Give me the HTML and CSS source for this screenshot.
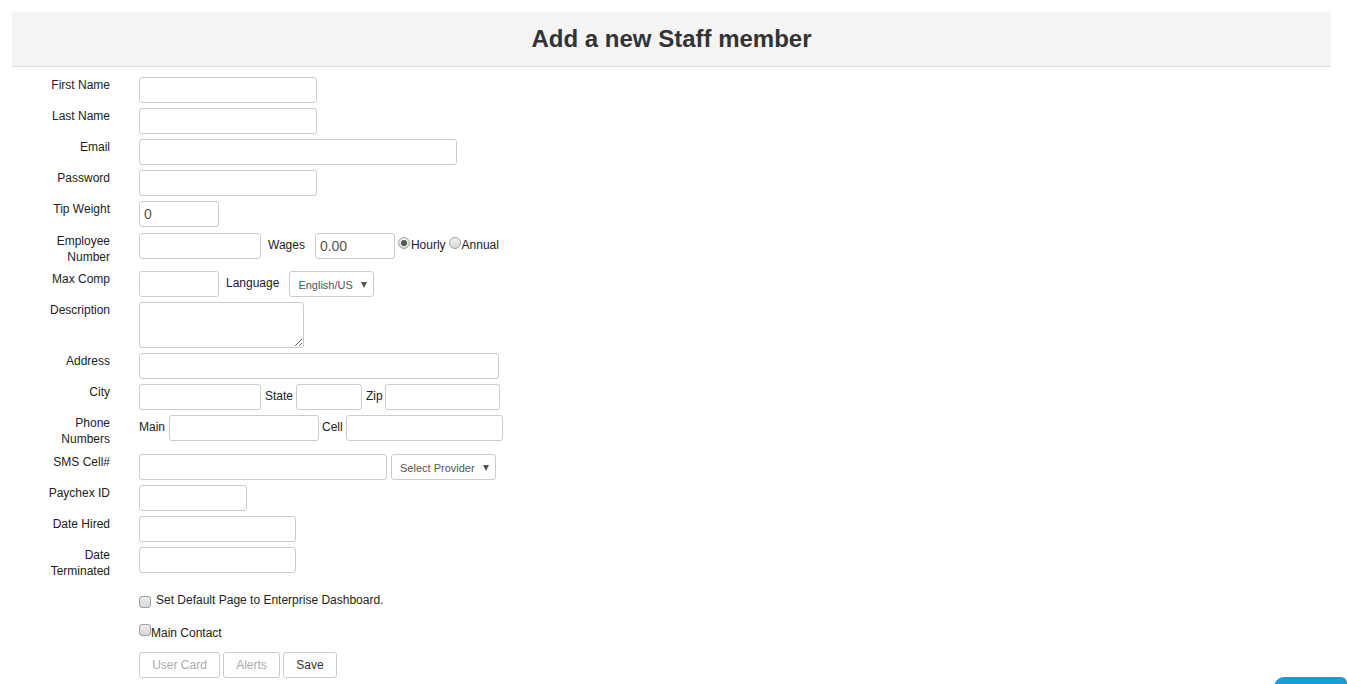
FILE: index.html
```html
<!DOCTYPE html>
<html lang="en">
<head>
    <meta charset="UTF-8">
    <title>Add a new Staff member</title>
    <link rel="stylesheet" href="styles.css">
</head>
<body>
    <div class="page">
        <div class="page-header">
            <h1>Add a new Staff member</h1>
        </div>

        <form class="staff-form">
            <div class="row">
                <label class="lbl">First Name</label>
                <div class="ctl"><input type="text" class="w178"></div>
            </div>
            <div class="row">
                <label class="lbl">Last Name</label>
                <div class="ctl"><input type="text" class="w178"></div>
            </div>
            <div class="row">
                <label class="lbl">Email</label>
                <div class="ctl"><input type="text" class="w318"></div>
            </div>
            <div class="row">
                <label class="lbl">Password</label>
                <div class="ctl"><input type="password" class="w178"></div>
            </div>
            <div class="row">
                <label class="lbl">Tip Weight</label>
                <div class="ctl"><input type="text" class="w80" value="0"></div>
            </div>
            <div class="row emp-row">
                <label class="lbl">Employee<br>Number</label>
                <div class="ctl">
                    <input type="text" class="w122">
                    <span class="inl wages-lbl">Wages</span>
                    <input type="text" class="w80" value="0.00">
                    <span class="radio-opt"><input type="radio" name="pay" checked>Hourly</span>
                    <span class="radio-opt"><input type="radio" name="pay">Annual</span>
                </div>
            </div>
            <div class="row">
                <label class="lbl">Max Comp</label>
                <div class="ctl">
                    <input type="text" class="w80">
                    <span class="inl lang-lbl">Language</span>
                    <span class="sel w85"><select><option>English/US</option></select></span>
                </div>
            </div>
            <div class="row">
                <label class="lbl">Description</label>
                <div class="ctl"><textarea></textarea></div>
            </div>
            <div class="row">
                <label class="lbl">Address</label>
                <div class="ctl"><input type="text" class="w360"></div>
            </div>
            <div class="row">
                <label class="lbl">City</label>
                <div class="ctl">
                    <input type="text" class="w122">
                    <span class="inl tight">State</span>
                    <input type="text" class="w66">
                    <span class="inl tight zip-lbl">Zip</span>
                    <input type="text" class="w115">
                </div>
            </div>
            <div class="row phone-row">
                <label class="lbl">Phone<br>Numbers</label>
                <div class="ctl">
                    <span class="inl first">Main</span>
                    <input type="text" class="w150">
                    <span class="inl cell-lbl">Cell</span>
                    <input type="text" class="w157">
                </div>
            </div>
            <div class="row">
                <label class="lbl">SMS Cell#</label>
                <div class="ctl">
                    <input type="text" class="w248">
                    <span class="sel w105 provider"><select><option>Select Provider</option></select></span>
                </div>
            </div>
            <div class="row">
                <label class="lbl">Paychex ID</label>
                <div class="ctl"><input type="text" class="w108"></div>
            </div>
            <div class="row">
                <label class="lbl">Date Hired</label>
                <div class="ctl"><input type="text" class="w157"></div>
            </div>
            <div class="row">
                <label class="lbl">Date<br>Terminated</label>
                <div class="ctl"><input type="text" class="w157"></div>
            </div>

            <div class="check-row dash-row">
                <input type="checkbox"><span>Set Default Page to Enterprise Dashboard.</span>
            </div>
            <div class="check-row contact-row">
                <input type="checkbox"><span>Main Contact</span>
            </div>

            <div class="actions">
                <button type="button" class="btn btn-card" disabled>User Card</button>
                <button type="button" class="btn btn-alerts" disabled>Alerts</button>
                <button type="button" class="btn btn-save">Save</button>
            </div>
        </form>
    </div>

    <div class="chat-tab"></div>
</body>
</html>
```

FILE: styles.css
```css
body {
    margin: 0;
    font-family: "Liberation Sans", Arial, sans-serif;
    font-size: 12px;
    color: #333;
    background: #fff;
    overflow: hidden;
}
.page {
    padding: 12px 16px 0 12px;
}
.page-header {
    background: #f4f4f4;
    border-bottom: 1px solid #ddd;
    height: 54px;
    display: flex;
    align-items: center;
    justify-content: center;
}
.page-header h1 {
    margin: 0;
    font-size: 24px;
    font-weight: bold;
    color: #333;
}
.staff-form {
    padding-top: 10px;
}
.row {
    display: flex;
    align-items: flex-start;
    margin-bottom: 5px;
}
.emp-row {
    padding-top: 1px;
}
.phone-row {
    margin-bottom: 6px;
}
.lbl {
    width: 98px;
    margin-right: 29px;
    padding-bottom: 1px;
    text-align: right;
    line-height: 16px;
    color: #222;
}
.ctl {
    display: flex;
    align-items: center;
}
input[type="text"], input[type="password"], textarea {
    box-sizing: border-box;
    height: 26px;
    border: 1px solid #ccc;
    border-radius: 3px;
    padding: 0 4px;
    font-family: "Liberation Sans", Arial, sans-serif;
    font-size: 14px;
    color: #555;
    margin: 0;
}
textarea {
    width: 165px;
    height: 46px;
    resize: both;
}
.w66 { width: 66px; }
.w80 { width: 80px; }
.w108 { width: 108px; }
.w115 { width: 115px; }
.w122 { width: 122px; }
.w150 { width: 150px; }
.w157 { width: 157px; }
.w178 { width: 178px; }
.w248 { width: 248px; }
.w318 { width: 318px; }
.w360 { width: 360px; }

.inl {
    color: #222;
    margin-top: -3px;
}
.wages-lbl {
    margin-left: 7px;
    margin-right: 10px;
}
.lang-lbl {
    margin-left: 7px;
    margin-right: 10px;
}
.inl.tight {
    margin-left: 4px;
    margin-right: 3px;
}
.inl.zip-lbl {
    margin-right: 2px;
}
.inl.first {
    margin-right: 4px;
}
.inl.cell-lbl {
    margin-left: 3px;
    margin-right: 3px;
}
.radio-opt {
    display: flex;
    align-items: flex-start;
    align-self: flex-start;
    margin-top: 4px;
    margin-left: 3px;
    line-height: 17px;
    color: #222;
}
input[type="radio"] {
    appearance: none;
    -webkit-appearance: none;
    width: 12px;
    height: 12px;
    margin: 0 1px 0 0;
    border: 1px solid #a0a0a0;
    border-radius: 50%;
    background: linear-gradient(#f2f2f2, #d8d8d8);
    box-sizing: border-box;
    position: relative;
}
input[type="radio"]:checked::after {
    content: "";
    position: absolute;
    left: 2px;
    top: 2px;
    width: 6px;
    height: 6px;
    border-radius: 50%;
    background: #555;
}
.sel {
    position: relative;
    display: inline-block;
}
.sel select {
    appearance: none;
    -webkit-appearance: none;
    box-sizing: border-box;
    width: 100%;
    height: 26px;
    border: 1px solid #ccc;
    border-radius: 3px;
    background: #fff;
    padding: 2px 0 0 8px;
    font-family: "Liberation Sans", Arial, sans-serif;
    font-size: 11px;
    color: #555;
    margin: 0;
}
.sel::after {
    content: "";
    position: absolute;
    right: 7px;
    top: 11px;
    width: 0;
    height: 0;
    border-left: 3px solid transparent;
    border-right: 3px solid transparent;
    border-top: 6px solid #555;
    pointer-events: none;
}
.w85 { width: 85px; }
.w105 { width: 105px; }
.provider {
    margin-left: 4px;
}

.check-row {
    margin-left: 127px;
    display: flex;
    color: #222;
}
input[type="checkbox"] {
    appearance: none;
    -webkit-appearance: none;
    width: 12px;
    height: 12px;
    margin: 0;
    border: 1px solid #a0a0a0;
    border-radius: 3px;
    background: linear-gradient(#eee, #d6d6d6);
    box-sizing: border-box;
}
.dash-row {
    margin-top: 14px;
    align-items: flex-start;
}
.dash-row input {
    margin-top: 2px;
    margin-right: 5px;
}
.dash-row span {
    line-height: 17px;
    margin-top: -2px;
}
.contact-row {
    margin-top: 15px;
    align-items: flex-start;
}
.contact-row span {
    margin-top: 1px;
    line-height: 17px;
}
.actions {
    margin-left: 127px;
    margin-top: 10px;
    display: flex;
    gap: 3px;
}
.btn {
    box-sizing: border-box;
    height: 26px;
    padding: 0;
    border: 1px solid #ccc;
    border-radius: 3px;
    background: #fff;
    font-family: "Liberation Sans", Arial, sans-serif;
    font-size: 12px;
    color: #333;
}
.btn:disabled {
    color: #aaa;
}
.btn-card { width: 81px; }
.btn-alerts { width: 57px; }
.btn-save { width: 54px; }
.chat-tab {
    position: fixed;
    right: 0;
    bottom: -20px;
    width: 73px;
    height: 27px;
    background: #1a9bd7;
    border-radius: 10px 6px 0 0;
}
```
